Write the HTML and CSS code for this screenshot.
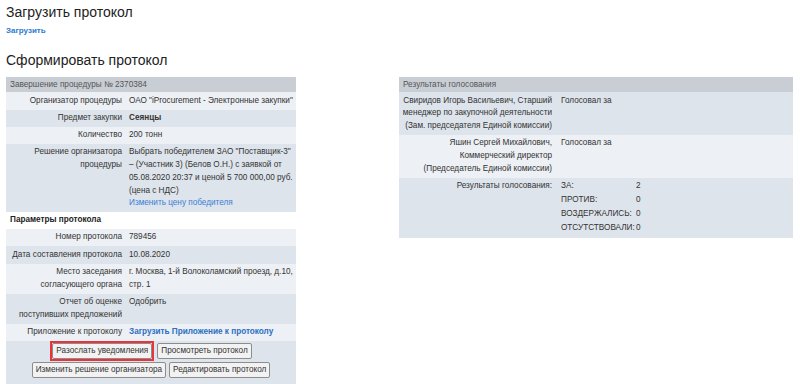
FILE: index.html
```html
<!DOCTYPE html>
<html lang="ru">

<head>
  <meta charset="UTF-8" />
  <title>Протокол</title>
  <link rel="stylesheet" href="styles.css">
</head>

<body>
  <h2 class="title">Загрузить протокол</h2>
  <a href="#" class="upload-link">Загрузить</a>

  <h2 class="title title-form">Сформировать протокол</h2>

  <div class="columns">
    <div class="col">
      <table class="grid left-grid">
        <tr class="head"><td colspan="2">Завершение процедуры № 2370384</td></tr>
        <tr class="light">
          <td class="label">Организатор процедуры</td>
          <td>ОАО "iProcurement - Электронные закупки"</td>
        </tr>
        <tr class="dark">
          <td class="label">Предмет закупки</td>
          <td><b>Сеянцы</b></td>
        </tr>
        <tr class="light">
          <td class="label">Количество</td>
          <td>200 тонн</td>
        </tr>
        <tr class="dark">
          <td class="label">Решение организатора процедуры</td>
          <td>Выбрать победителем ЗАО "Поставщик-3" – (Участник 3) (Белов О.Н.) с заявкой от 05.08.2020 20:37 и ценой 5 700 000,00 руб. (цена с НДС)<br><a href="#" class="link">Изменить цену победителя</a></td>
        </tr>
        <tr class="section"><td colspan="2">Параметры протокола</td></tr>
        <tr class="light">
          <td class="label">Номер протокола</td>
          <td>789456</td>
        </tr>
        <tr class="dark">
          <td class="label">Дата составления протокола</td>
          <td>10.08.2020</td>
        </tr>
        <tr class="light">
          <td class="label">Место заседания согласующего органа</td>
          <td>г. Москва, 1-й Волоколамский проезд, д.10, стр. 1</td>
        </tr>
        <tr class="dark">
          <td class="label">Отчет об оценке поступивших предложений</td>
          <td>Одобрить</td>
        </tr>
        <tr class="light">
          <td class="label">Приложение к протоколу</td>
          <td><a href="#" class="link link-bold">Загрузить Приложение к протоколу</a></td>
        </tr>
        <tr class="dark">
          <td colspan="2" class="actions">
            <div class="btn-row">
              <span class="highlight"><button class="btn">Разослать уведомления</button></span>
              <button class="btn">Просмотреть протокол</button>
            </div>
            <div class="btn-row">
              <button class="btn">Изменить решение организатора</button>
              <button class="btn">Редактировать протокол</button>
            </div>
          </td>
        </tr>
      </table>
    </div>

    <div class="col">
      <table class="grid right-grid">
        <tr class="head"><td colspan="2">Результаты голосования</td></tr>
        <tr class="dark">
          <td class="label">Свиридов Игорь Васильевич, Старший менеджер по закупочной деятельности (Зам. председателя Единой комиссии)</td>
          <td>Голосовал за</td>
        </tr>
        <tr class="light">
          <td class="label">Яшин Сергей Михайлович, Коммерческий директор (Председатель Единой комиссии)</td>
          <td>Голосовал за</td>
        </tr>
        <tr class="dark">
          <td class="label">Результаты голосования:</td>
          <td>
            <table class="votes">
              <tr><td>ЗА:</td><td>2</td></tr>
              <tr><td>ПРОТИВ:</td><td>0</td></tr>
              <tr><td>ВОЗДЕРЖАЛИСЬ:</td><td>0</td></tr>
              <tr><td>ОТСУТСТВОВАЛИ:</td><td>0</td></tr>
            </table>
          </td>
        </tr>
      </table>
    </div>
  </div>
</body>

</html>
```

FILE: styles.css
```css
body {
  margin: 0;
  padding: 0 6px;
  font-family: 'Liberation Sans', Arial, sans-serif;
  color: #333;
  background: #fff;
}

.title {
  font-size: 14px;
  font-weight: normal;
  color: #222;
  margin: 0;
  padding-top: 3px;
  line-height: 18px;
}

.title-form {
  padding-top: 15px;
}

.upload-link {
  display: block;
  font-size: 8px;
  font-weight: bold;
  color: #2a7ad0;
  text-decoration: none;
  margin-top: 5px;
  line-height: 10px;
}

.columns {
  display: grid;
  grid-template-columns: 1fr 1fr;
  margin-top: 8px;
}

.grid {
  border-collapse: collapse;
  font-size: 8.2px;
  line-height: 12.75px;
}

.grid td {
  padding: 2.25px 2px 2.25px 3px;
  vertical-align: top;
}

.left-grid {
  width: 290px;
}

.right-grid {
  width: 100%;
  max-width: 395px;
  margin-left: -1px;
}

.head td {
  background: #c9ced5;
  color: #555;
  padding: 1.5px 4px 1px;
}

.light td {
  background: #edf0f4;
}

.dark td {
  background: #dee4eb;
}

.section td {
  background: #fff;
  font-weight: bold;
  color: #222;
  padding: 2px 4px;
}

.label {
  text-align: right;
}

.left-grid .label {
  width: 113px;
  padding-right: 4px;
}

.right-grid .label {
  width: 150px;
  padding-right: 6px;
}

.link {
  color: #3a7fd6;
  text-decoration: none;
}

.link-bold {
  font-weight: bold;
  color: #2b6fc2;
}

.grid .actions {
  text-align: center;
  padding: 2px 0 3px;
}

.btn-row {
  display: flex;
  justify-content: center;
  align-items: center;
  gap: 3px;
  margin-bottom: 3px;
}

.btn {
  font-family: 'Liberation Sans', Arial, sans-serif;
  font-size: 8.2px;
  line-height: 12px;
  color: #333;
  background: #f2f2f2;
  border: 1px solid #8d8d8d;
  border-radius: 2px;
  padding: 1px 3px;
}

.highlight {
  display: inline-flex;
  border: 2px solid #e8343a;
  margin: -2px 0;
}

.votes {
  border-collapse: collapse;
}

.grid .votes td {
  padding: 0 0 1.25px 0;
  background: transparent;
  line-height: 12.75px;
}

.grid .votes td:first-child {
  width: 75px;
}
```
